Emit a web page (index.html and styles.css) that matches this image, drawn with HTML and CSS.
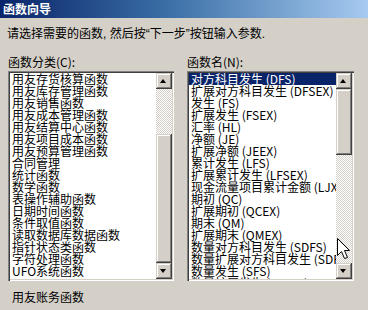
FILE: index.html
```html
<!DOCTYPE html>
<html>
<head>
<meta charset="utf-8">
<title>函数向导</title>
<link rel="stylesheet" href="styles.css">
</head>
<body>
<div class="titlebar">函数向导</div>
<div class="content">
  <p class="intro">请选择需要的函数<span class="q">, </span>然后按<span class="q">“</span>下一步<span class="q">”</span>按钮输入参数<span class="q">.</span></p>
  <div class="cols">
    <div class="col">
      <div class="label">函数分类(C):</div>
      <div class="listbox left">
        <ul class="items">
          <li>用友存货核算函数</li>
          <li>用友库存管理函数</li>
          <li>用友销售函数</li>
          <li>用友成本管理函数</li>
          <li>用友结算中心函数</li>
          <li>用友项目成本函数</li>
          <li>用友预算管理函数</li>
          <li>合同管理</li>
          <li>统计函数</li>
          <li>数学函数</li>
          <li>表操作辅助函数</li>
          <li>日期时间函数</li>
          <li>条件取值函数</li>
          <li>读取数据库数据函数</li>
          <li>指针状态类函数</li>
          <li>字符处理函数</li>
          <li>UFO系统函数</li>
        </ul>
        <div class="scrollbar">
          <div class="btn up"></div>
          <div class="track" style="height:45px"></div>
          <div class="thumb" style="height:129px"></div>
          <div class="btn down"></div>
        </div>
      </div>
    </div>
    <div class="col">
      <div class="label">函数名(N):</div>
      <div class="listbox right">
        <ul class="items">
          <li class="sel">对方科目发生 (DFS)</li>
          <li>扩展对方科目发生 (DFSEX)</li>
          <li>发生 (FS)</li>
          <li>扩展发生 (FSEX)</li>
          <li>汇率 (HL)</li>
          <li>净额 (JE)</li>
          <li>扩展净额 (JEEX)</li>
          <li>累计发生 (LFS)</li>
          <li>扩展累计发生 (LFSEX)</li>
          <li>现金流量项目累计金额 (LJX)</li>
          <li>期初 (QC)</li>
          <li>扩展期初 (QCEX)</li>
          <li>期末 (QM)</li>
          <li>扩展期末 (QMEX)</li>
          <li>数量对方科目发生 (SDFS)</li>
          <li>数量扩展对方科目发生 (SDFSEX)</li>
          <li>数量发生 (SFS)</li>
          <li>数量扩展发生 (SFSEX)</li>
        </ul>
        <div class="scrollbar">
          <div class="btn up"></div>
          <div class="thumb" style="height:66px"></div>
          <div class="track" style="height:108px"></div>
          <div class="btn down"></div>
        </div>
      </div>
    </div>
  </div>
  <div class="status">用友账务函数</div>
</div>
<svg class="cursor" width="14" height="22" viewBox="0 0 14 22">
  <path d="M0.5 0.5 L0.5 17.5 L4.5 13.5 L7.5 20.5 L10.5 19.5 L7.5 12.5 L12.5 12.5 Z" fill="#fff" stroke="#000" stroke-width="1"/>
</svg>
</body>
</html>
```

FILE: styles.css
```css
* { box-sizing: border-box; }
html, body {
  margin: 0;
  padding: 0;
  background: #d4d0c8;
  width: 368px;
  height: 310px;
  overflow: hidden;
  font-family: "Noto Sans CJK SC", "Noto Sans", sans-serif;
  font-size: 12px;
  color: #000;
}
.titlebar {
  height: 18px;
  line-height: 17px;
  padding-left: 3px;
  color: #fff;
  font-weight: bold;
  font-size: 12px;
  background: linear-gradient(to right, #0a246a 0%, #3a6ea5 45%, #a6caf0 100%);
}
.content {
  padding: 0 0 0 8px;
}
.intro {
  margin: 9px 0 0 -1px;
  line-height: 12px;
  height: 12px;
  white-space: nowrap;
}
.q {
  font-family: "Liberation Sans", sans-serif;
}
.cols {
  display: flex;
  gap: 13px;
  margin-top: 17px;
}
.col {
  display: flex;
  flex-direction: column;
}
.label {
  line-height: 12px;
  height: 12px;
  margin-bottom: 3px;
  white-space: nowrap;
}
.listbox {
  height: 210px;
  display: flex;
  padding: 2px;
  box-shadow: inset 1px 1px #808080, inset 2px 2px #404040, inset -1px -1px #ffffff, inset -2px -2px #d4d0c8;
}
.listbox.left { width: 166px; }
.listbox.right { width: 167px; }
.items {
  flex: 1;
  margin: 0;
  padding: 0;
  list-style: none;
  background: #fff;
  overflow: hidden;
}
.items li {
  height: 12px;
  line-height: 12px;
  padding-left: 2px;
  white-space: nowrap;
}
.items li.sel {
  background: #0a246a;
  color: #fff;
}
.scrollbar {
  width: 16px;
  display: flex;
  flex-direction: column;
}
.btn, .thumb {
  background: #d4d0c8;
  box-shadow: inset -1px -1px #404040, inset 1px 1px #d4d0c8, inset -2px -2px #808080, inset 2px 2px #ffffff;
}
.btn {
  height: 16px;
  position: relative;
}
.btn::after {
  content: "";
  position: absolute;
  left: 4px;
  width: 0;
  height: 0;
  border-left: 3.5px solid transparent;
  border-right: 3.5px solid transparent;
}
.btn.up::after {
  top: 6px;
  border-bottom: 4px solid #000;
}
.btn.down::after {
  top: 6px;
  border-top: 4px solid #000;
}
.track {
  background: repeating-conic-gradient(#d4d0c8 0 25%, #ffffff 0 50%) 0 0 / 2px 2px;
}
.status {
  margin-top: 10px;
  margin-left: 4px;
  line-height: 12px;
  height: 12px;
}
.cursor {
  position: absolute;
  left: 337px;
  top: 238px;
}
```
